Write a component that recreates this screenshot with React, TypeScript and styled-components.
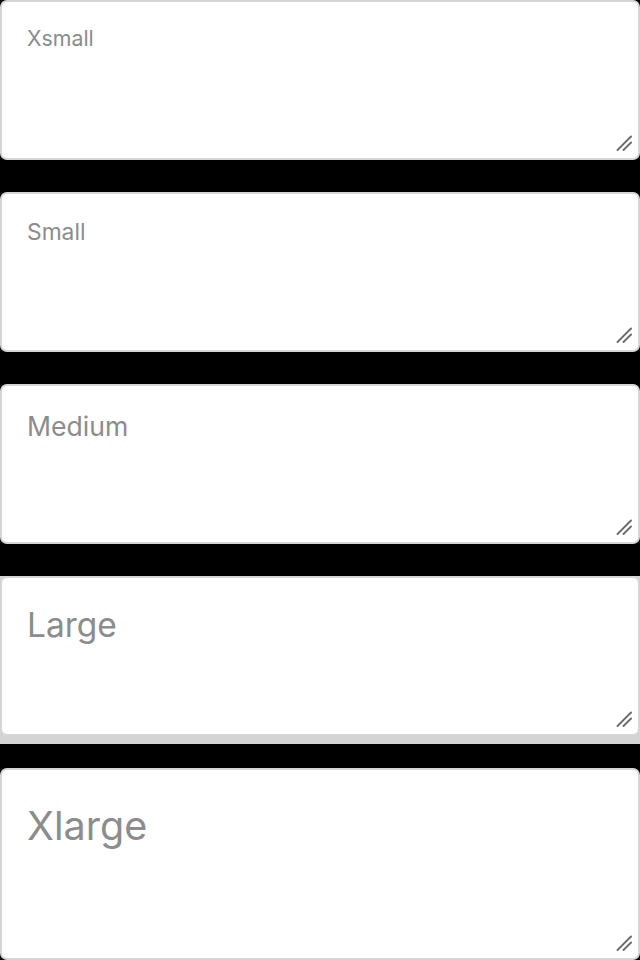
import React from "react";
import styled, { createGlobalStyle } from "styled-components";

const Global = createGlobalStyle`
  html, body { margin: 0; padding: 0; background: #000; }
  body { font-family: Inter, "Noto Sans", sans-serif; }
`;

type Size = "xs" | "sm" | "md" | "lg" | "xl";

const specs: Record<Size, { font: number; padTop: number; height: number }> = {
  xs: { font: 21.3, padTop: 24, height: 160 },
  sm: { font: 22.8, padTop: 24, height: 160 },
  md: { font: 26.6, padTop: 24, height: 160 },
  lg: { font: 33.5, padTop: 27, height: 160 },
  xl: { font: 39.5, padTop: 33, height: 192 },
};

const Stack = styled.div`
  display: flex;
  flex-direction: column;
`;

const Slot = styled.div<{ $gap: number; $band?: boolean }>`
  display: flex;
  flex-direction: column;
  margin-bottom: ${(p) => p.$gap}px;
  background: ${(p) => (p.$band ? "#d4d4d4" : "transparent")};
  padding-bottom: ${(p) => (p.$band ? 8 : 0)}px;
`;

const Field = styled.div`
  position: relative;
`;

const Area = styled.textarea<{ $size: Size }>`
  display: block;
  box-sizing: border-box;
  width: 100%;
  height: ${(p) => specs[p.$size].height}px;
  margin: 0;
  padding: ${(p) => specs[p.$size].padTop}px 24px 0 25px;
  border: 2px solid #d6d6d6;
  border-radius: 7px;
  background: #fff;
  font-family: Inter, "Noto Sans", sans-serif;
  font-size: ${(p) => specs[p.$size].font}px;
  line-height: 1.21;
  color: #333;
  resize: none;
  outline: none;
  &::placeholder {
    color: #8c8c8c;
    opacity: 1;
  }
`;

const Grip = styled.svg`
  position: absolute;
  right: 8px;
  bottom: 9px;
  width: 16px;
  height: 16px;
  pointer-events: none;
`;

const ResizeGrip = () => (
  <Grip viewBox="0 0 16 16">
    <line x1="1.5" y1="15" x2="15" y2="1.5" stroke="#6a6a6a" strokeWidth="1.8" strokeLinecap="round" />
    <line x1="7.5" y1="15" x2="15" y2="7.5" stroke="#6a6a6a" strokeWidth="1.8" strokeLinecap="round" />
  </Grip>
);

const items: { size: Size; label: string; gap: number; band?: boolean }[] = [
  { size: "xs", label: "Xsmall", gap: 32 },
  { size: "sm", label: "Small", gap: 32 },
  { size: "md", label: "Medium", gap: 32 },
  { size: "lg", label: "Large", gap: 24, band: true },
  { size: "xl", label: "Xlarge", gap: 0 },
];

export default function App() {
  return (
    <>
      <Global />
      <Stack>
        {items.map((it) => (
          <Slot key={it.label} $gap={it.gap} $band={it.band}>
            <Field>
              <Area $size={it.size} placeholder={it.label} />
              <ResizeGrip />
            </Field>
          </Slot>
        ))}
      </Stack>
    </>
  );
}
